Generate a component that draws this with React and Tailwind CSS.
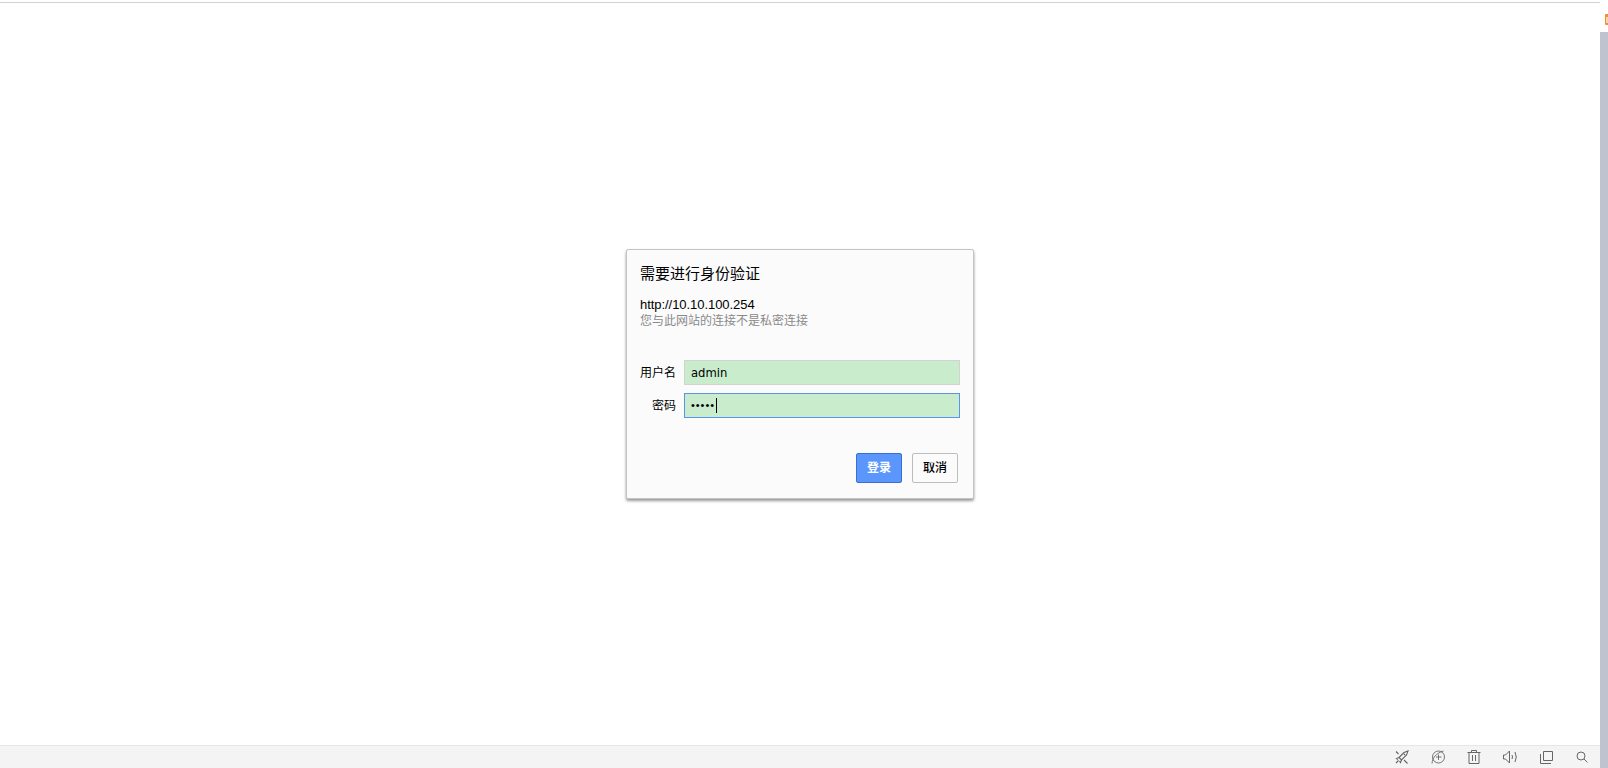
export default function App() {
  return (
    <div className="flex h-[768px] w-[1608px] overflow-hidden bg-white font-['Liberation_Sans','Noto_Sans_CJK_SC',sans-serif] text-black">
      <div className="flex w-[1600px] flex-col">
        <div className="mt-[2px] h-px bg-[#d2d2d2]" />
        <div className="flex flex-1 items-center justify-center">
          <div className="flex h-[250px] w-[348px] flex-col rounded-[2px] border border-[#c4c4c4] bg-[#fbfbfb] shadow-[0_2px_3px_rgba(0,0,0,0.4)]">
            <h1 className="ml-[13px] mt-[14px] text-[15px] leading-[20px]">需要进行身份验证</h1>
            <p className="ml-[13px] mt-[13px] text-[13px] leading-[15px] tracking-[-0.05px]">http://10.10.100.254</p>
            <p className="ml-[13px] mt-[2px] text-[12px] leading-[15px] text-[#8a8a8a]">您与此网站的连接不是私密连接</p>
            <div className="mt-[31px] flex flex-col gap-[8px]">
              <div className="flex items-center">
                <label className="w-[49px] text-right text-[12px]">用户名</label>
                <div className="ml-[8px] flex h-[25px] w-[276px] items-center border border-[#d2d2d2] bg-[#c9edcc] pl-[6px] pt-[2px] font-['DejaVu_Sans'] text-[11.6px]">admin</div>
              </div>
              <div className="flex items-center">
                <label className="w-[49px] text-right text-[12px]">密码</label>
                <div className="ml-[8px] flex h-[25px] w-[276px] items-center border border-[#5a93ee] bg-[#c9edcc] pl-[6px]">
                  <span className="text-[11px] leading-none tracking-[0.95px]">•••••</span>
                  <span className="ml-px h-[15px] w-px bg-black" />
                </div>
              </div>
            </div>
            <div className="mt-[35px] flex justify-end gap-[10px] pr-[15px]">
              <button className="h-[30px] w-[46px] rounded-[2px] border border-[#3b6fd1] bg-[#5a96fc] text-[12px] font-bold text-white">登录</button>
              <button className="h-[30px] w-[46px] rounded-[2px] border border-[#bdbdbd] bg-[#fbfbfb] text-[12px] font-medium text-black">取消</button>
            </div>
          </div>
        </div>
        <div className="flex h-[23px] items-center justify-end border-t border-[#e6e6e6] bg-[#f4f4f4] text-[#666]">
          <div className="flex w-9 justify-center">
            <svg width="14" height="14" viewBox="0 0 14 14" fill="none" stroke="currentColor" strokeWidth="1.1">
              <path d="M4 7.5 L9 2.5 L13 1 L11.5 5 L6.5 10 Z" />
              <path d="M4 7.5 L1.5 8.5 L3 9.5 M6.5 10 L5.5 12.5 L4.5 11" />
              <path d="M3.5 10.5 L1 13 M9 5 L10 4 M1 1.5 L3.5 4 M9 10 L12.5 13.5" />
            </svg>
          </div>
          <div className="flex w-9 justify-center">
            <svg width="14" height="14" viewBox="0 0 14 14" fill="none" stroke="currentColor" strokeWidth="0.9">
              <circle cx="7.5" cy="7" r="6" />
              <path d="M7.5 4.5 V10 M5 7 H10.5 M1 13.5 C1.5 8 5 3 12.5 1" />
            </svg>
          </div>
          <div className="flex w-9 justify-center">
            <svg width="14" height="14" viewBox="0 0 14 14" fill="none" stroke="currentColor" strokeWidth="1">
              <path d="M.5 2.5 H13.5 M2 2.5 V13.5 H12 V2.5 M4.5 2.5 V.5 H9.5 V2.5 M5.5 5 V11 M8.5 5 V11" />
            </svg>
          </div>
          <div className="flex w-9 justify-center">
            <svg width="15" height="14" viewBox="0 0 15 14" fill="none" stroke="currentColor" strokeWidth="1">
              <path d="M.5 5 H2.5 L6.5 1 V13 L2.5 9 H.5 Z" />
              <path d="M9 5 Q10 7 9 9 M12 2 Q14.5 7 12 12" />
            </svg>
          </div>
          <div className="flex w-9 justify-center">
            <svg width="13" height="13" viewBox="0 0 13 13" fill="none" stroke="currentColor" strokeWidth="1">
              <path d="M3.5 .5 H12.5 V9.5 H3.5 Z M.5 3 V12.5 H11" />
            </svg>
          </div>
          <div className="flex w-9 justify-center">
            <svg width="12" height="12" viewBox="0 0 12 12" fill="none" stroke="currentColor" strokeWidth="1">
              <circle cx="5" cy="5" r="4" />
              <path d="M8 8 L11.5 11.5" />
            </svg>
          </div>
        </div>
      </div>
      <div className="flex w-2 flex-col">
        <div className="h-[32px] bg-white pt-[14px]">
          <div className="ml-[5px] flex h-[11px] w-[3px] items-center rounded-l-[1px] bg-[#f28d3a] pl-px">
            <div className="h-[6px] w-[2px] bg-[#fbd3ac]" />
          </div>
        </div>
        <div className="flex-1 bg-[#bfc3cf]" />
      </div>
    </div>
  );
}
